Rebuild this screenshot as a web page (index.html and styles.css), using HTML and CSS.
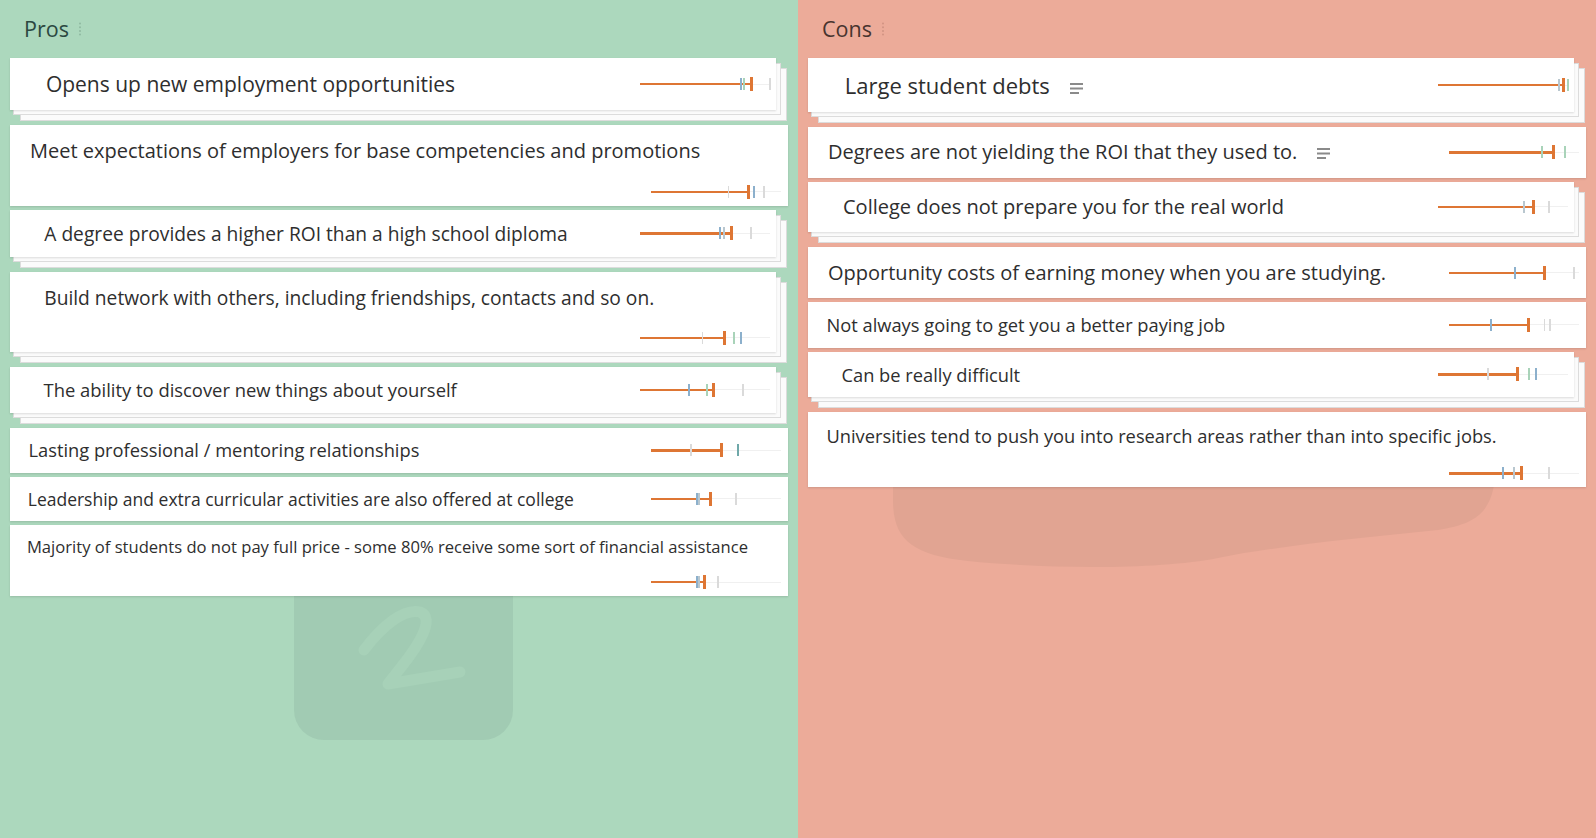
FILE: index.html
```html
<!DOCTYPE html>
<html lang="en">
<head>
<meta charset="utf-8">
<title>Pros and Cons</title>
<link rel="stylesheet" href="styles.css">
</head>
<body>
<div class="board">
  <section class="column pros">
    <svg class="watermark" width="798" height="838" viewBox="0 0 798 838">
      <rect x="294" y="540" width="219" height="200" rx="30" fill="#a1cbb3"/>
      <path d="M364 650 C382 626 404 608 420 612 C436 618 418 646 402 666 L388 684 L460 672" fill="none" stroke="#a7d1b8" stroke-width="11" stroke-linecap="round" stroke-linejoin="round"/>
    </svg>
    <header class="col-head">
      <span class="col-title">Pros</span>
      <svg class="handle" width="4" height="14" viewBox="0 0 4 14"><circle cx="2" cy="1.5" r="1"/><circle cx="2" cy="5.2" r="1"/><circle cx="2" cy="8.9" r="1"/><circle cx="2" cy="12.6" r="1"/></svg>
    </header>
    <div class="cards">
      <div class="card stack fs21">
        <div class="text">Opens up new employment opportunities</div>
        <div class="slider"><span class="track"></span><span class="fill" style="width:111px"></span><span class="tick blue" style="left:100px"></span><span class="tick green" style="left:102.7px"></span><span class="cap" style="left:110.2px"></span><span class="tick light" style="left:129px"></span></div>
      </div>
      <div class="card wrap fs20">
        <div class="text">Meet expectations of employers for base competencies and promotions</div>
        <div class="slider"><span class="track"></span><span class="fill" style="width:97px"></span><span class="tick light" style="left:76.7px"></span><span class="cap" style="left:95.5px"></span><span class="tick blue" style="left:101.7px"></span><span class="tick light" style="left:112.3px"></span></div>
      </div>
      <div class="card stack fs19">
        <div class="text">A degree provides a higher ROI than a high school diploma</div>
        <div class="slider"><span class="track"></span><span class="fill" style="width:91px"></span><span class="tick blue" style="left:78.7px"></span><span class="tick grey" style="left:83.3px"></span><span class="cap" style="left:89.5px"></span><span class="tick light" style="left:110px"></span></div>
      </div>
      <div class="card stack wrap fs19w">
        <div class="text">Build network with others, including friendships, contacts and so on.</div>
        <div class="slider"><span class="track"></span><span class="fill" style="width:84.7px"></span><span class="tick light" style="left:61.7px"></span><span class="cap" style="left:83.2px"></span><span class="tick green" style="left:92.7px"></span><span class="tick blue" style="left:100px"></span></div>
      </div>
      <div class="card stack fs184">
        <div class="text">The ability to discover new things about yourself</div>
        <div class="slider"><span class="track"></span><span class="fill" style="width:73px"></span><span class="tick blue" style="left:48.3px"></span><span class="tick green" style="left:66px"></span><span class="cap" style="left:71.5px"></span><span class="tick light" style="left:102.3px"></span></div>
      </div>
      <div class="card fs183">
        <div class="text">Lasting professional / mentoring relationships</div>
        <div class="slider"><span class="track"></span><span class="fill" style="width:70.7px"></span><span class="tick light" style="left:39px"></span><span class="cap" style="left:69.2px"></span><span class="tick teal" style="left:85.7px"></span></div>
      </div>
      <div class="card fs175">
        <div class="text">Leadership and extra curricular activities are also offered at college</div>
        <div class="slider"><span class="track"></span><span class="fill" style="width:59px"></span><span class="tick blue" style="left:45px"></span><span class="tick grey" style="left:47.3px"></span><span class="cap" style="left:57.5px"></span><span class="tick light" style="left:84px"></span></div>
      </div>
      <div class="card wrap fs166">
        <div class="text">Majority of students do not pay full price - some 80% receive some sort of financial assistance</div>
        <div class="slider"><span class="track"></span><span class="fill" style="width:53.3px"></span><span class="tick blue" style="left:45px"></span><span class="tick grey" style="left:46.7px"></span><span class="cap" style="left:51.8px"></span><span class="tick light" style="left:66.3px"></span></div>
      </div>
    </div>
  </section>

  <section class="column cons">
    <svg class="watermark" width="798" height="838" viewBox="0 0 798 838">
      <path d="M95 440 L698 440 C700 505 690 522 640 530 C560 538 480 546 420 558 C360 570 250 569 170 561 C112 555 95 538 95 500 Z" fill="#e1a492"/>
    </svg>
    <header class="col-head">
      <span class="col-title">Cons</span>
      <svg class="handle" width="4" height="14" viewBox="0 0 4 14"><circle cx="2" cy="1.5" r="1"/><circle cx="2" cy="5.2" r="1"/><circle cx="2" cy="8.9" r="1"/><circle cx="2" cy="12.6" r="1"/></svg>
    </header>
    <div class="cards">
      <div class="card stack fs22">
        <div class="text">Large student debts<svg class="notes" width="14" height="13" viewBox="0 0 14 13"><rect x="0" y="1" width="13" height="2"/><rect x="0" y="5.5" width="13" height="2"/><rect x="0" y="10" width="9" height="2"/></svg></div>
        <div class="slider"><span class="track"></span><span class="fill" style="width:125.6px"></span><span class="tick grey" style="left:120.3px"></span><span class="cap" style="left:124.1px"></span><span class="tick green" style="left:128.5px"></span></div>
      </div>
      <div class="card fs20">
        <div class="text">Degrees are not yielding the ROI that they used to.<svg class="notes" width="14" height="13" viewBox="0 0 14 13"><rect x="0" y="1" width="13" height="2"/><rect x="0" y="5.5" width="13" height="2"/><rect x="0" y="10" width="9" height="2"/></svg></div>
        <div class="slider"><span class="track"></span><span class="fill" style="width:104px"></span><span class="tick green" style="left:92.4px"></span><span class="cap" style="left:102.5px"></span><span class="tick green" style="left:114.7px"></span></div>
      </div>
      <div class="card stack fs20">
        <div class="text">College does not prepare you for the real world</div>
        <div class="slider"><span class="track"></span><span class="fill" style="width:95.6px"></span><span class="tick grey" style="left:84.6px"></span><span class="cap" style="left:94.1px"></span><span class="tick light" style="left:110px"></span></div>
      </div>
      <div class="card fs20b">
        <div class="text">Opportunity costs of earning money when you are studying.</div>
        <div class="slider"><span class="track"></span><span class="fill" style="width:95px"></span><span class="tick blue" style="left:64.7px"></span><span class="cap" style="left:93.5px"></span><span class="tick light" style="left:124px"></span></div>
      </div>
      <div class="card fs183b">
        <div class="text">Not always going to get you a better paying job</div>
        <div class="slider"><span class="track"></span><span class="fill" style="width:79px"></span><span class="tick blue" style="left:40.7px"></span><span class="cap" style="left:77.5px"></span><span class="tick light" style="left:94.7px"></span><span class="tick light" style="left:100px"></span></div>
      </div>
      <div class="card stack fs183s">
        <div class="text">Can be really difficult</div>
        <div class="slider"><span class="track"></span><span class="fill" style="width:79px"></span><span class="tick light" style="left:49px"></span><span class="cap" style="left:77.5px"></span><span class="tick green" style="left:90px"></span><span class="tick blue" style="left:97.3px"></span></div>
      </div>
      <div class="card wrap fs183w">
        <div class="text">Universities tend to push you into research areas rather than into specific jobs.</div>
        <div class="slider"><span class="track"></span><span class="fill" style="width:72.4px"></span><span class="tick blue" style="left:53.4px"></span><span class="tick grey" style="left:64px"></span><span class="cap" style="left:70.9px"></span><span class="tick light" style="left:99px"></span></div>
      </div>
    </div>
  </section>
</div>
</body>
</html>
```

FILE: styles.css
```css
* {
  box-sizing: border-box;
}

html,
body {
  margin: 0;
  padding: 0;
}

body {
  width: 1596px;
  height: 838px;
  overflow: hidden;
  font-family: "Open Sans", "Noto Sans", sans-serif;
  color: #2e2e2e;
}

.board {
  display: grid;
  grid-template-columns: 798px 798px;
  height: 838px;
}

.column {
  position: relative;
  z-index: 0;
  padding: 0 10px;
  overflow: hidden;
}

.pros {
  background: #acd8bd;
}

.cons {
  background: #ecab99;
}

.watermark {
  position: absolute;
  left: 0;
  top: 0;
  z-index: -2;
}

.col-head {
  height: 58px;
  padding: 14px 0 0 14px;
  display: flex;
  align-items: flex-start;
}

.col-title {
  font-size: 21.5px;
  line-height: 30px;
}

.pros .col-title {
  color: #2b4841;
}

.cons .col-title {
  color: #48342f;
}

.handle {
  margin: 8px 0 0 9px;
}

.pros .handle {
  fill: #8fb9a1;
}

.cons .handle {
  fill: #d19383;
}

.cards {
  display: flex;
  flex-direction: column;
}

.card {
  position: relative;
  display: flex;
  align-items: center;
  background: #fff;
  box-shadow: 0 1px 2px rgba(0, 0, 0, 0.13);
  padding: 10px 7px 10px 0;
  margin-bottom: 4px;
}

.card.stack {
  margin-right: 12px;
  margin-bottom: 15px;
  padding-right: 6px;
}

.card.stack::before,
.card.stack::after {
  content: "";
  position: absolute;
  z-index: -1;
  background: #fbfbfb;
  border: 1px solid #dcdcdc;
}

.card.stack::before {
  left: 10px;
  right: -11px;
  top: 10px;
  bottom: -11px;
}

.card.stack::after {
  left: 3px;
  right: -5px;
  top: 5px;
  bottom: -5px;
}

.text {
  flex: 1;
  padding-left: calc(0.9em + 2px);
}

.stack .text {
  padding-left: calc(0.9em + 17px);
}

.card.wrap {
  display: block;
  padding: 11px 7px 6px 0;
}

.card.stack.wrap {
  padding-right: 6px;
}

.wrap .slider {
  margin: 17px 0 0 auto;
}

.notes {
  margin-left: 20px;
  vertical-align: -1px;
  fill: #8a8a8a;
}

.fs22 { font-size: 22px; line-height: 34px; }
.fs21 { font-size: 21px; line-height: 32px; }
.fs20 { font-size: 20px; line-height: 30.5px; }
.fs20b { font-size: 20px; line-height: 31px; }
.fs19 { font-size: 19.2px; line-height: 27.5px; }
.fs19w { font-size: 19.2px; line-height: 29.5px; }
.fs184 { font-size: 18.4px; line-height: 26.5px; }
.fs183 { font-size: 18.3px; line-height: 24.5px; }
.fs183s { font-size: 18.3px; line-height: 25.5px; }
.fs183b { font-size: 18.3px; line-height: 25.7px; }
.fs183w { font-size: 18.3px; line-height: 25px; }
.fs175 { font-size: 17.5px; line-height: 24.5px; }
.fs166 { font-size: 16.6px; line-height: 21px; }

.slider {
  flex: none;
  position: relative;
  display: block;
  width: 130px;
  height: 16px;
}

.slider span {
  position: absolute;
  display: block;
}

.track {
  left: 0;
  right: 0;
  top: 7.5px;
  height: 1px;
  background: rgba(0, 0, 0, 0.06);
}

.fill {
  left: 0;
  top: 7px;
  height: 2.4px;
  background: #de7634;
}

.cap {
  top: 1px;
  width: 3px;
  height: 14px;
  background: #de7634;
}

.tick {
  top: 2px;
  width: 2px;
  height: 12px;
}

.tick.blue {
  background: #8cb0cc;
}

.tick.grey {
  background: #b9c7cf;
}

.tick.green {
  background: #a9d3b9;
}

.tick.teal {
  background: #6fa8a9;
}

.tick.light {
  background: #dadada;
  width: 1.5px;
}
```
